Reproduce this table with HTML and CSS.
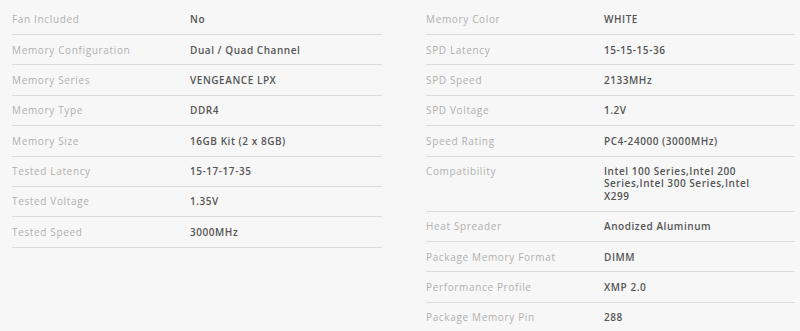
FILE: index.html
```html
<!DOCTYPE html>
<html lang="en">
<head>
<meta charset="utf-8">
<title>Specifications</title>
<link rel="stylesheet" href="styles.css">
</head>
<body>
<div class="specs">
  <dl class="spec-col">
    <div class="row"><dt>Fan Included</dt><dd>No</dd></div>
    <div class="row"><dt>Memory Configuration</dt><dd>Dual / Quad Channel</dd></div>
    <div class="row"><dt>Memory Series</dt><dd>VENGEANCE LPX</dd></div>
    <div class="row"><dt>Memory Type</dt><dd>DDR4</dd></div>
    <div class="row"><dt>Memory Size</dt><dd>16GB Kit (2 x 8GB)</dd></div>
    <div class="row"><dt>Tested Latency</dt><dd>15-17-17-35</dd></div>
    <div class="row"><dt>Tested Voltage</dt><dd>1.35V</dd></div>
    <div class="row"><dt>Tested Speed</dt><dd>3000MHz</dd></div>
  </dl>
  <dl class="spec-col">
    <div class="row"><dt>Memory Color</dt><dd>WHITE</dd></div>
    <div class="row"><dt>SPD Latency</dt><dd>15-15-15-36</dd></div>
    <div class="row"><dt>SPD Speed</dt><dd>2133MHz</dd></div>
    <div class="row"><dt>SPD Voltage</dt><dd>1.2V</dd></div>
    <div class="row"><dt>Speed Rating</dt><dd>PC4-24000 (3000MHz)</dd></div>
    <div class="row"><dt>Compatibility</dt><dd class="wrap">Intel 100 Series,Intel 200 Series,Intel 300 Series,Intel X299</dd></div>
    <div class="row"><dt>Heat Spreader</dt><dd>Anodized Aluminum</dd></div>
    <div class="row"><dt>Package Memory Format</dt><dd>DIMM</dd></div>
    <div class="row"><dt>Performance Profile</dt><dd>XMP 2.0</dd></div>
    <div class="row"><dt>Package Memory Pin</dt><dd>288</dd></div>
  </dl>
</div>
</body>
</html>
```
FILE: styles.css
```css
html, body {
  margin: 0;
  padding: 0;
  background: #f7f7f7;
}
body {
  font-family: "Open Sans", "Liberation Sans", sans-serif;
  font-size: 10px;
}
.specs {
  display: grid;
  grid-template-columns: 370px 369px;
  column-gap: 44px;
  padding: 4.7px 5px 0 12px;
}
.spec-col {
  margin: 0;
}
.row {
  display: grid;
  grid-template-columns: 178px 1fr;
  padding: 8.5px 0;
  border-bottom: 1px solid #dcdcdc;
  line-height: 12.375px;
}
dt {
  color: #b0b0b0;
  letter-spacing: 0.65px;
}
dd {
  margin: 0;
  color: #555555;
  font-weight: 600;
  letter-spacing: 0.55px;
}
.wrap {
  max-width: 160px;
}
```
